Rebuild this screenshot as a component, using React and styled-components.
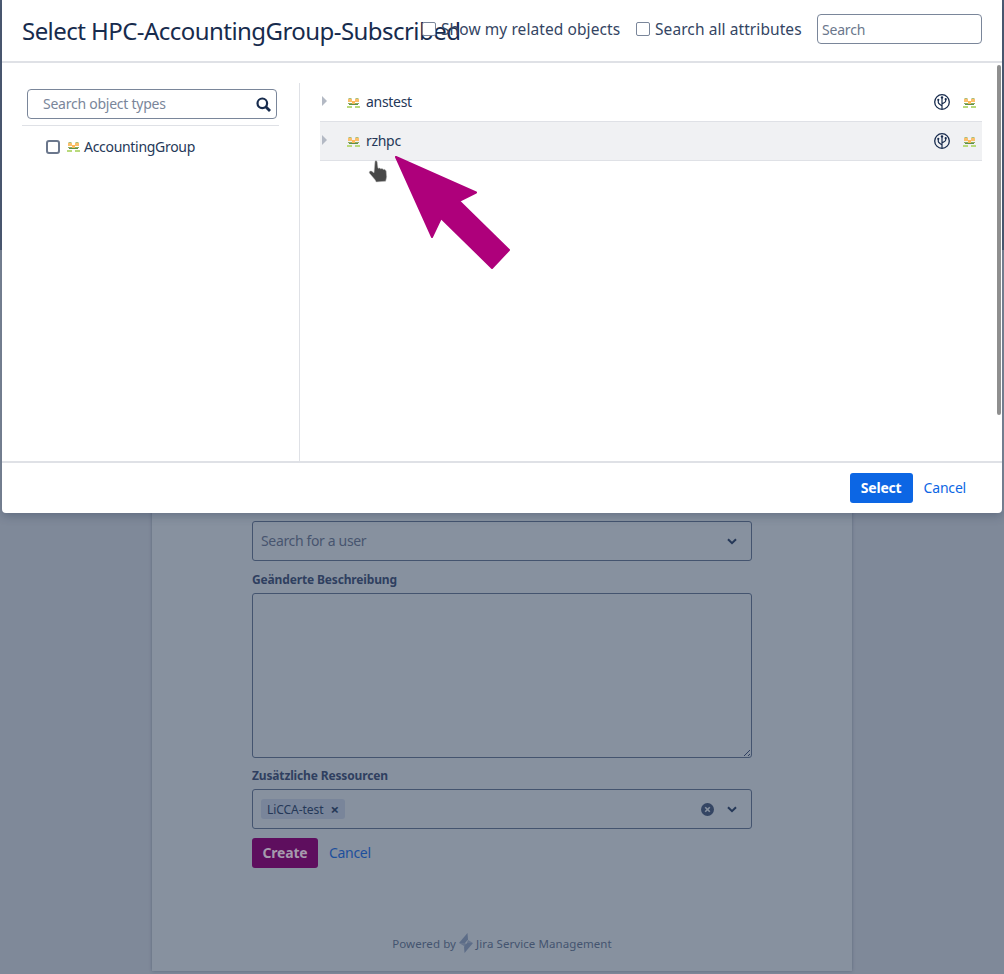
import React from 'react';
import styled, { createGlobalStyle } from 'styled-components';

const rows = ['anstest', 'rzhpc'];

function GroupIcon() {
  return (
    <GroupSvg width="13" height="11" viewBox="0 0 13 11">
      <rect x="1.500" y="0" width="3" height="1" fill="#a8bf7c" />
      <rect x="8.500" y="0" width="3" height="1" fill="#a8bf7c" />
      <rect x="1" y="1" width="4" height="3" fill="#fbbf6a" />
      <rect x="8" y="1" width="4" height="3" fill="#fbbf6a" />
      <rect x="5" y="3" width="3" height="3" fill="#fbb95c" />
      <rect x="1" y="5" width="4" height="1" fill="#8fae62" />
      <rect x="8" y="5" width="4" height="1" fill="#8fae62" />
      <rect x="2" y="6" width="9" height="1" fill="#5f9048" />
      <rect x="0" y="8" width="5" height="2" fill="#b9da7c" />
      <rect x="8" y="8" width="5" height="2" fill="#b9da7c" />
    </GroupSvg>
  );
}

function BranchIcon() {
  return (
    <svg width="16" height="16" viewBox="0 0 16 16" fill="none" stroke="#172b4d">
      <circle cx="8" cy="8" r="7.300" strokeWidth="1.300" />
      <path d="M8 3v12M4.300 6v2.500c0 1.300 2 1.800 3.700 3.500M11.700 5.500v1.500c0 1.300-2 1.800-3.700 3" strokeWidth="1.200" />
      <circle cx="8" cy="3.400" r="1.200" fill="#172b4d" stroke="none" />
      <circle cx="4.300" cy="5.800" r="1.100" fill="#172b4d" stroke="none" />
      <circle cx="11.700" cy="5.200" r="1.100" fill="#172b4d" stroke="none" />
    </svg>
  );
}

function SearchIcon() {
  return (
    <svg width="15" height="15" viewBox="0 0 15 15" fill="none" stroke="#172b4d" strokeWidth="2.200">
      <circle cx="6.300" cy="6.300" r="4.800" />
      <path d="M10 10l4 4" strokeWidth="2.800" />
    </svg>
  );
}

function Chevron() {
  return (
    <svg width="10" height="7" viewBox="0 0 10 7" fill="none" stroke="#253858" strokeWidth="2">
      <path d="M1 1.200l4 4 4-4" />
    </svg>
  );
}

function ClearIcon() {
  return (
    <svg width="13" height="13" viewBox="0 0 13 13">
      <circle cx="6.500" cy="6.500" r="6.500" fill="#344563" />
      <path d="M4.200 4.200l4.600 4.600M8.800 4.200l-4.600 4.600" stroke="#87919f" strokeWidth="1.600" />
    </svg>
  );
}

function BoltIcon() {
  return (
    <svg width="16" height="20" viewBox="0 0 16 20" fill="#5d6d88">
      <path d="M9.500 0L1 10h6l3-3.500z" />
      <path d="M6.500 20L15 10H9l-3 3.500z" />
      <path d="M1 10h6l3 3h-4zM9 10h6l-5-3z" opacity="0.75" />
    </svg>
  );
}

function HandCursor() {
  return (
    <svg width="21" height="23" viewBox="0 0 21 23">
      <path d="M7 1.200c.8-.8 2-.4 2.200.7l.8 6.300 1.600-.2 1 .8 1.600-.3 1 .9 1.500-.1 1.500 1.600.500 6-1 4.300-9.500.8-1.200-2.200-5.500-6.500c-1-1.400.400-3 2-2.200l2.500 1.700z"
        fill="#484848" stroke="#c4c4c4" strokeWidth="0.500" />
    </svg>
  );
}

export default function App() {
  return (
    <Page>
      <GlobalStyle />
      <Card>
        <Form>
          <SelectBox>
            <Placeholder>Search for a user</Placeholder>
            <Chevron />
          </SelectBox>
          <FieldLabel $top={11}>Geänderte Beschreibung</FieldLabel>
          <TextArea />
          <FieldLabel $top={10}>Zusätzliche Ressourcen</FieldLabel>
          <SelectBox>
            <Tag>LiCCA-test <TagClose>×</TagClose></Tag>
            <SelectActions>
              <ClearIcon />
              <Chevron />
            </SelectActions>
          </SelectBox>
          <Actions>
            <CreateButton>Create</CreateButton>
            <DimLink>Cancel</DimLink>
          </Actions>
        </Form>
        <Powered>Powered by <BoltIcon /> Jira Service Management</Powered>
      </Card>

      <Modal>
        <ModalHeader>
          <Title>Select HPC-AccountingGroup-Subscribed</Title>
          <HeaderOption $width={214}><CheckBox $flat />Show my related objects</HeaderOption>
          <HeaderOption $width={166}><CheckBox $flat />Search all attributes</HeaderOption>
          <HeaderSearch placeholder="Search" />
        </ModalHeader>
        <ModalBody>
          <TypesPanel>
            <TypesSearch>
              <LiftedText>Search object types</LiftedText>
              <SearchIcon />
            </TypesSearch>
            <TypeRow>
              <CheckBox />
              <GroupIcon />
              <span>AccountingGroup</span>
            </TypeRow>
          </TypesPanel>
          <ObjectsPanel>
            {rows.map((name, i) => (
              <ObjectRow key={name} $active={i === 1}>
                <Caret />
                <GroupIcon />
                <ObjectName>{name}</ObjectName>
                <RowIcons>
                  <BranchIcon />
                  <GroupIcon />
                </RowIcons>
              </ObjectRow>
            ))}
          </ObjectsPanel>
          <Scrollbar />
        </ModalBody>
        <ModalFooter>
          <SelectButton>Select</SelectButton>
          <FooterLink>Cancel</FooterLink>
        </ModalFooter>
      </Modal>

      <Pointer><HandCursor /></Pointer>
      <Annotation width="130" height="125" viewBox="0 0 130 125">
        <path d="M2 2L82 37.500L65 46L115 95L98 113L47 63L38 82Z" fill="#ae007b" stroke="#ae007b" strokeWidth="2" strokeLinejoin="round" />
      </Annotation>
    </Page>
  );
}

const GlobalStyle = createGlobalStyle`
  body {
    margin: 0;
    font-family: "Noto Sans", "Open Sans", sans-serif;
    color: #172b4d;
  }
  * {
    box-sizing: border-box;
  }
`
const Page = styled.div`
  position: relative;
  height: 974px;
  overflow: hidden;
  padding-left: 152px;
  background: linear-gradient(#4e5c74 250px, #7f8999 250px);
`
const Card = styled.div`
  width: 700px;
  height: 971px;
  padding: 521px 100px 0;
  background-color: #87919f;
  box-shadow: 0 0 3px rgba(30, 45, 75, 0.35);
`
const Form = styled.div`
  display: flex;
  flex-direction: column;
  height: 347px;
`
const SelectBox = styled.div`
  display: flex;
  align-items: center;
  justify-content: space-between;
  height: 40px;
  flex: none;
  padding: 0 14px 0 8px;
  border: 1px solid #44546f;
  border-radius: 3px;
`
const Placeholder = styled.span`
  padding-bottom: 2px;
  font-size: 14px;
  letter-spacing: -0.35px;
  color: #47556f;
`
const FieldLabel = styled.label`
  flex: none;
  margin-top: ${(p) => p.$top}px;
  height: 21px;
  font-size: 12px;
  line-height: 16px;
  font-weight: 700;
  letter-spacing: -0.15px;
  color: #2f3f60;
`
const TextArea = styled.div`
  position: relative;
  height: 165px;
  flex: none;
  border: 1px solid #44546f;
  border-radius: 3px;
  &::after {
    content: '';
    position: absolute;
    right: 1px;
    bottom: 1px;
    width: 9px;
    height: 9px;
    background: repeating-linear-gradient(135deg, transparent 0 2px, #2f3f60 2px 3px);
    clip-path: polygon(100% 0, 100% 100%, 0 100%);
  }
`
const Tag = styled.span`
  display: inline-flex;
  align-items: center;
  gap: 7px;
  width: 84px;
  height: 20px;
  padding: 0 5px 0 6px;
  border-radius: 3px;
  background-color: #79859a;
  font-size: 12px;
  letter-spacing: -0.05px;
  white-space: nowrap;
  color: #253858;
`
const TagClose = styled.span`
  font-size: 15px;
  font-weight: 700;
`
const SelectActions = styled.span`
  display: flex;
  align-items: center;
  gap: 13px;
`
const Actions = styled.div`
  display: flex;
  align-items: center;
  gap: 11px;
  margin-top: 9px;
`
const CreateButton = styled.button`
  width: 66px;
  height: 30px;
  padding: 0 0 2px;
  border: 0;
  border-radius: 3px;
  background-color: #5e0e5e;
  font: 700 14px "Noto Sans", sans-serif;
  letter-spacing: -0.2px;
  color: #a59aad;
`
const DimLink = styled.a`
  padding-bottom: 2px;
  font-size: 14px;
  letter-spacing: -0.3px;
  color: #1d4f9c;
`
const Powered = styled.div`
  display: flex;
  align-items: center;
  justify-content: center;
  gap: 2px;
  margin-top: 65px;
  font-size: 11.500px;
  letter-spacing: 0.08px;
  color: #44546f;
`
const Modal = styled.div`
  position: absolute;
  top: 0;
  left: 2px;
  display: flex;
  flex-direction: column;
  width: 1000px;
  height: 513px;
  border-radius: 0 0 4px 4px;
  background-color: #fff;
  box-shadow: 0 3px 10px rgba(30, 45, 75, 0.3);
`
const ModalHeader = styled.div`
  display: flex;
  align-items: center;
  flex: none;
  height: 63px;
  padding: 0 20px 3px 20px;
  border-bottom: 2px solid #dfe1e6;
`
const Title = styled.h2`
  flex: 0 0 400px;
  min-width: 0;
  margin: 3px 0 0;
  font-size: 24px;
  font-weight: 400;
  letter-spacing: -0.55px;
  white-space: nowrap;
  color: #172b4d;
`
const HeaderOption = styled.label`
  display: flex;
  align-items: center;
  flex: none;
  gap: 5px;
  width: ${(p) => p.$width}px;
  font-size: 15.500px;
  letter-spacing: 0.08px;
  white-space: nowrap;
  color: #344563;
`
const CheckBox = styled.span`
  flex: none;
  width: 14px;
  height: 14px;
  border: ${(p) => (p.$flat ? '1px solid #7a869a' : '2px solid #6b778c')};
  border-radius: ${(p) => (p.$flat ? '2px' : '3px')};
  background-color: #fff;
`
const HeaderSearch = styled.input`
  flex: none;
  width: 165px;
  height: 30px;
  margin-left: 15px;
  padding: 0 4px;
  border: 1px solid #7a869a;
  border-radius: 4px;
  outline: none;
  font: 14px "Noto Sans", sans-serif;
  letter-spacing: -0.2px;
  &::placeholder {
    color: #6b778c;
  }
`
const ModalBody = styled.div`
  position: relative;
  display: flex;
  flex: 1;
  min-height: 0;
  padding: 20px 20px 0;
`
const TypesPanel = styled.div`
  flex: none;
  width: 278px;
  padding-top: 6px;
  border-right: 1px solid #dfe1e6;
`
const TypesSearch = styled.div`
  display: flex;
  align-items: center;
  justify-content: space-between;
  width: 250px;
  height: 30px;
  margin-left: 5px;
  padding: 0 5px 0 15px;
  border: 1px solid #7a869a;
  border-radius: 4px;
  font-size: 14px;
  letter-spacing: -0.25px;
  color: #7a869a;
`
const LiftedText = styled.span`
  padding-bottom: 2px;
`
const TypeRow = styled.div`
  display: flex;
  align-items: center;
  height: 42px;
  width: 257px;
  margin-top: 6px;
  padding-left: 24px;
  border-top: 1px solid #dfe1e6;
  font-size: 14px;
  letter-spacing: -0.3px;
  color: #253858;
  & > svg {
    margin: 2px 4px 0 7px;
  }
`
const GroupSvg = styled.svg`
  flex: none;
  margin-top: 2px;
`
const ObjectsPanel = styled.div`
  flex: 1;
  padding-left: 20px;
`
const ObjectRow = styled.div`
  display: flex;
  align-items: center;
  height: 39px;
  padding: 0 6px 0 2px;
  border-bottom: 1px solid #dfe1e6;
  background-color: ${(p) => (p.$active ? '#f0f1f3' : '#fff')};
  font-size: 14px;
  color: #253858;
  & > svg {
    margin-left: 20px;
  }
`
const Caret = styled.span`
  width: 0;
  height: 0;
  margin-bottom: 2px;
  border-style: solid;
  border-width: 5px 0 5px 5px;
  border-color: transparent transparent transparent #b3b9c4;
`
const ObjectName = styled.span`
  flex: 1;
  margin-left: 6px;
  padding-bottom: 2px;
  letter-spacing: -0.3px;
`
const RowIcons = styled.span`
  display: flex;
  align-items: center;
  gap: 13px;
`
const Scrollbar = styled.div`
  position: absolute;
  top: 2px;
  right: 1px;
  width: 4px;
  height: 350px;
  border-radius: 2px;
  background-color: #8f8f8f;
`
const ModalFooter = styled.div`
  display: flex;
  align-items: center;
  flex: none;
  justify-content: flex-end;
  gap: 11px;
  height: 52px;
  padding-right: 36px;
  border-top: 2px solid #dfe1e6;
`
const SelectButton = styled.button`
  width: 63px;
  height: 30px;
  padding: 0 0 2px;
  border: 0;
  border-radius: 3px;
  background-color: #0c66e4;
  font: 700 14px "Noto Sans", sans-serif;
  letter-spacing: -0.2px;
  color: #fff;
`
const FooterLink = styled.a`
  padding-bottom: 2px;
  font-size: 14px;
  letter-spacing: -0.2px;
  color: #0c66e4;
`
const Pointer = styled.div`
  position: absolute;
  top: 160px;
  left: 368px;
`
const Annotation = styled.svg`
  position: absolute;
  top: 155px;
  left: 394px;
`
